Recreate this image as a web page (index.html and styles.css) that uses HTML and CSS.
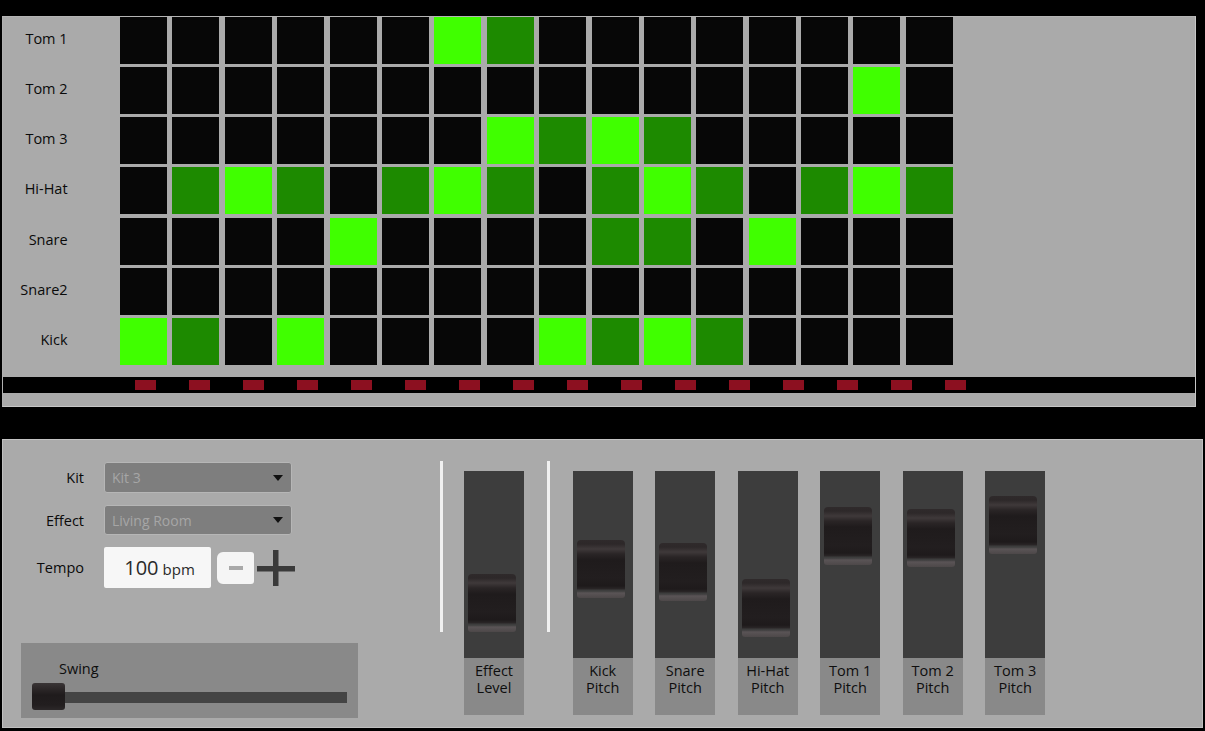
FILE: index.html
```html
<!DOCTYPE html>
<html>
<head>
<meta charset="utf-8">
<title>Drum Machine</title>
<link rel="stylesheet" href="styles.css">
</head>
<body>
<section class="seq">
  <div class="grid">
    <div class="lbl">Tom 1</div>
    <i class="c"></i><i class="c"></i><i class="c"></i><i class="c"></i><i class="c"></i><i class="c"></i><i class="c on"></i><i class="c dim"></i><i class="c"></i><i class="c"></i><i class="c"></i><i class="c"></i><i class="c"></i><i class="c"></i><i class="c"></i><i class="c"></i>
    <div class="lbl">Tom 2</div>
    <i class="c"></i><i class="c"></i><i class="c"></i><i class="c"></i><i class="c"></i><i class="c"></i><i class="c"></i><i class="c"></i><i class="c"></i><i class="c"></i><i class="c"></i><i class="c"></i><i class="c"></i><i class="c"></i><i class="c on"></i><i class="c"></i>
    <div class="lbl">Tom 3</div>
    <i class="c"></i><i class="c"></i><i class="c"></i><i class="c"></i><i class="c"></i><i class="c"></i><i class="c"></i><i class="c on"></i><i class="c dim"></i><i class="c on"></i><i class="c dim"></i><i class="c"></i><i class="c"></i><i class="c"></i><i class="c"></i><i class="c"></i>
    <div class="lbl">Hi-Hat</div>
    <i class="c"></i><i class="c dim"></i><i class="c on"></i><i class="c dim"></i><i class="c"></i><i class="c dim"></i><i class="c on"></i><i class="c dim"></i><i class="c"></i><i class="c dim"></i><i class="c on"></i><i class="c dim"></i><i class="c"></i><i class="c dim"></i><i class="c on"></i><i class="c dim"></i>
    <div class="lbl">Snare</div>
    <i class="c"></i><i class="c"></i><i class="c"></i><i class="c"></i><i class="c on"></i><i class="c"></i><i class="c"></i><i class="c"></i><i class="c"></i><i class="c dim"></i><i class="c dim"></i><i class="c"></i><i class="c on"></i><i class="c"></i><i class="c"></i><i class="c"></i>
    <div class="lbl">Snare2</div>
    <i class="c"></i><i class="c"></i><i class="c"></i><i class="c"></i><i class="c"></i><i class="c"></i><i class="c"></i><i class="c"></i><i class="c"></i><i class="c"></i><i class="c"></i><i class="c"></i><i class="c"></i><i class="c"></i><i class="c"></i><i class="c"></i>
    <div class="lbl">Kick</div>
    <i class="c on"></i><i class="c dim"></i><i class="c"></i><i class="c on"></i><i class="c"></i><i class="c"></i><i class="c"></i><i class="c"></i><i class="c on"></i><i class="c dim"></i><i class="c on"></i><i class="c dim"></i><i class="c"></i><i class="c"></i><i class="c"></i><i class="c"></i>
  </div>
  <div class="steps">
    <span class="step"></span><span class="step"></span><span class="step"></span><span class="step"></span><span class="step"></span><span class="step"></span><span class="step"></span><span class="step"></span><span class="step"></span><span class="step"></span><span class="step"></span><span class="step"></span><span class="step"></span><span class="step"></span><span class="step"></span><span class="step"></span>
  </div>
</section>

<section class="controls">
  <div class="left">
    <div class="form">
      <div class="frow">
        <label class="flabel">Kit</label>
        <div class="select sel-kit">Kit 3<span class="caret"></span></div>
      </div>
      <div class="frow">
        <label class="flabel">Effect</label>
        <div class="select sel-fx">Living Room<span class="caret"></span></div>
      </div>
      <div class="frow">
        <label class="flabel">Tempo</label>
        <div class="tempo"><span class="tnum">100</span> <span class="tunit">bpm</span></div>
        <div class="minus"><span class="minus-bar"></span></div>
        <svg class="plus" width="38" height="36" viewBox="0 0 38 36"><rect x="0" y="16" width="38" height="5.5" fill="#3a3a3a"/><rect x="16" y="0" width="5.5" height="36" fill="#3a3a3a"/></svg>
      </div>
    </div>
    <div class="swing">
      <div class="swing-title">Swing</div>
      <div class="hslider">
        <div class="htrack"></div>
        <div class="hthumb"></div>
      </div>
    </div>
  </div>

  <div class="faders">
    <div class="vline"></div>
    <div class="fader first">
      <div class="track"><div class="thumb" style="top:103px"></div></div>
      <div class="flbl">Effect<br>Level</div>
    </div>
    <div class="vline second"></div>
    <div class="fader kick">
      <div class="track"><div class="thumb" style="top:69px"></div></div>
      <div class="flbl">Kick<br>Pitch</div>
    </div>
    <div class="fader">
      <div class="track"><div class="thumb" style="top:72px"></div></div>
      <div class="flbl">Snare<br>Pitch</div>
    </div>
    <div class="fader">
      <div class="track"><div class="thumb" style="top:108px"></div></div>
      <div class="flbl">Hi-Hat<br>Pitch</div>
    </div>
    <div class="fader">
      <div class="track"><div class="thumb" style="top:36px"></div></div>
      <div class="flbl">Tom 1<br>Pitch</div>
    </div>
    <div class="fader">
      <div class="track"><div class="thumb" style="top:38px"></div></div>
      <div class="flbl">Tom 2<br>Pitch</div>
    </div>
    <div class="fader">
      <div class="track"><div class="thumb" style="top:25px"></div></div>
      <div class="flbl">Tom 3<br>Pitch</div>
    </div>
  </div>
</section>
</body>
</html>
```

FILE: styles.css
```css
html, body {
  margin: 0;
  padding: 0;
}
body {
  background: #000;
  width: 1205px;
  height: 731px;
  overflow: hidden;
  font-family: "Open Sans", "DejaVu Sans", sans-serif;
  color: #0e0e0e;
  padding-top: 16px;
  box-sizing: border-box;
}

/* ---------- sequencer ---------- */
.seq {
  margin-left: 2px;
  width: 1194px;
  height: 391px;
  box-sizing: border-box;
  background: #aaaaaa;
  border: 1px solid #c6c6c6;
  border-top-color: #b4b4b4;
  border-left-color: #b0b0b0;
}
.grid {
  display: grid;
  grid-template-columns: 111.6px repeat(16, 47px);
  grid-auto-rows: 47px;
  column-gap: 5.4px;
  row-gap: 3.17px;
}
.lbl {
  align-self: center;
  text-align: right;
  padding-right: 47px;
  padding-bottom: 3px;
  font-size: 14.5px;
  line-height: 20px;
  color: #0a0a0a;
}
.c {
  display: block;
  background: #070707;
}
.c.on { background: #40ff00; }
.c.dim { background: #1d8a00; }

.steps {
  margin-top: 12px;
  height: 16px;
  background: #000;
  display: flex;
  align-items: center;
  gap: 33px;
  padding-left: 132px;
}
.step {
  width: 21px;
  height: 10px;
  background: #8c1020;
}

/* ---------- controls ---------- */
.controls {
  margin: 32px 0 0 2px;
  width: 1201px;
  height: 289px;
  box-sizing: border-box;
  background: #aaaaaa;
  border: 1px solid #bfbfbf;
  border-top-color: #c4c4c4;
  display: flex;
}
.left {
  width: 437px;
  flex: none;
}
.form {
  padding-top: 22px;
  display: flex;
  flex-direction: column;
  gap: 12px;
}
.frow {
  display: flex;
  align-items: center;
}
.flabel {
  width: 81px;
  margin-right: 20px;
  text-align: right;
  font-size: 14.5px;
  color: #0a0a0a;
}
.select {
  position: relative;
  width: 188px;
  box-sizing: border-box;
  background: #7e7e7e;
  border: 1px solid #b6b6b6;
  border-radius: 3px;
  color: #a6a6a6;
  font-size: 14px;
  padding-left: 7px;
  display: flex;
  align-items: center;
}
.sel-kit { height: 31px; }
.sel-fx { height: 30px; }
.caret {
  position: absolute;
  right: 8px;
  top: 50%;
  margin-top: -3px;
  width: 0;
  height: 0;
  border-left: 5px solid transparent;
  border-right: 5px solid transparent;
  border-top: 6px solid #111;
}
.tempo {
  width: 107px;
  height: 41px;
  background: #f7f7f7;
  border-radius: 2px;
  display: flex;
  align-items: baseline;
  justify-content: center;
  gap: 4px;
  color: #2a2a2a;
  line-height: 41px;
  padding-left: 4px;
  box-sizing: border-box;
}
.tnum { font-size: 20px; }
.tunit { font-size: 15px; }
.minus {
  margin-left: 6px;
  width: 37px;
  height: 32px;
  background: #f5f5f5;
  border-radius: 6px 3px 3px 6px;
  display: flex;
  align-items: center;
  justify-content: center;
}
.minus-bar {
  width: 14px;
  height: 4px;
  background: #a9a9a9;
}
.plus {
  display: block;
  margin-left: 3px;
}

.swing {
  margin: 55px 0 0 18px;
  width: 337px;
  height: 75px;
  background: #898989;
  box-sizing: border-box;
  padding: 16px 11px 0;
}
.swing-title {
  padding-left: 27px;
  font-size: 14.5px;
  line-height: 20px;
}
.hslider {
  position: relative;
  margin-top: 4px;
  height: 27px;
}
.htrack {
  position: relative;
  top: 9px;
  height: 11px;
  width: 315px;
  background: #444;
}
.hthumb {
  position: absolute;
  left: 0;
  top: 0;
  width: 33px;
  height: 27px;
  border-radius: 3px;
  background: linear-gradient(to bottom, #3a3536 0px, #2c2728 6px, #1f1b1c 12px, #221e1f 22px, #2c2829 27px);
}

/* ---------- faders ---------- */
.faders {
  display: flex;
  align-items: flex-start;
}
.vline {
  width: 3px;
  height: 171px;
  margin-top: 21px;
  background: #f0f0f0;
}
.vline.second { margin-left: 23px; }
.fader {
  width: 60px;
  margin-top: 31px;
  margin-left: 22.5px;
}
.fader.first { margin-left: 21px; }
.fader.kick { margin-left: 22.7px; }
.track {
  position: relative;
  height: 187px;
  background: #3d3d3d;
}
.thumb {
  position: absolute;
  left: 4px;
  width: 48px;
  height: 58px;
  border-radius: 4px 4px 3px 3px;
  background: linear-gradient(to bottom,
    #2f2a2b 0px, #2d2829 4px, #3f393a 9px, #2a2526 14px,
    #1f1b1c 20px, #221e1f 38px, #1e1a1b 46px, #2a2627 49px,
    #3d3d3d 50px, #3d3d3d 51px, #5a5456 53px, #4d4849 58px);
}
.flbl {
  height: 57px;
  background: #898989;
  text-align: center;
  font-size: 14.5px;
  line-height: 17px;
  padding-top: 4px;
  box-sizing: border-box;
  color: #0e0e0e;
}
```
